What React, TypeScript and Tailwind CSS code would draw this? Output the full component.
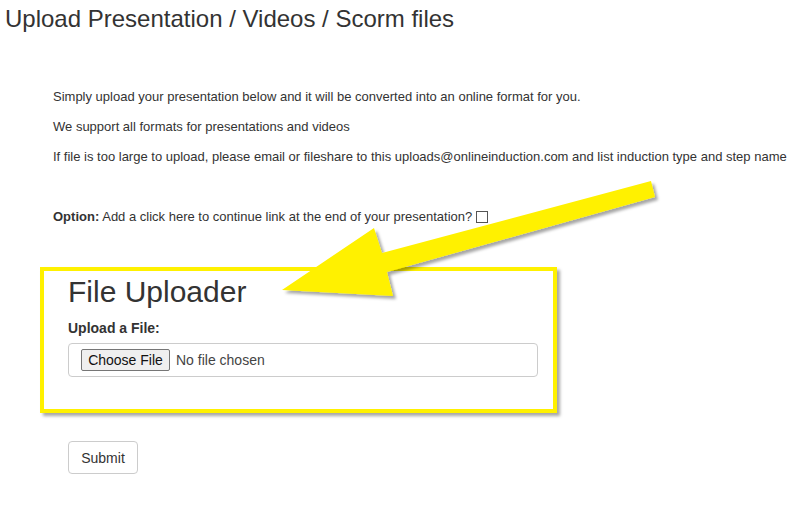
export default function App() {
  return (
    <div className="relative h-[505px] w-[804px] overflow-hidden bg-white font-['Liberation_Sans',Arial,sans-serif] text-[#333]">
      <h1 className="pl-[5px] pt-[5px] text-[24px] leading-[28px]">Upload Presentation / Videos / Scorm files</h1>

      <div className="ml-[53px] mt-[55px] flex flex-col gap-[12px] text-[13px] leading-[18px]">
        <p>Simply upload your presentation below and it will be converted into an online format for you.</p>
        <p>We support all formats for presentations and videos</p>
        <p className="whitespace-nowrap">If file is too large to upload, please email or fileshare to this uploads@onlineinduction.com and list induction type and step name</p>
        <p className="mt-[30px] flex items-center">
          <span className="font-bold">Option:</span>
          <span className="ml-[3px]">Add a click here to continue link at the end of your presentation?</span>
          <span className="ml-[4px] inline-block h-[12px] w-[12px] border border-[#555] bg-white" />
        </p>
      </div>

      <div className="ml-[40px] mt-[41px] flex h-[146px] w-[517px] flex-col border-4 border-[#fff100] pl-[24px] pr-[15px] pt-[4px] shadow-[3px_3px_3px_rgba(0,0,0,0.35)]">
        <h2 className="text-[30px] leading-[34px]">File Uploader</h2>
        <div className="mt-[10px] text-[14px] font-bold leading-[18px]">Upload a File:</div>
        <div className="mt-[6px] flex h-[34px] w-[470px] items-center rounded-[4px] border border-[#ccc] pl-[12px] text-[14px]">
          <span className="flex h-[22px] w-[89px] items-center justify-center rounded-[2px] border border-[#767676] bg-[#efefef] text-[#111]">Choose File</span>
          <span className="ml-[6px] text-[#444]">No file chosen</span>
        </div>
      </div>

      <button className="ml-[68px] mt-[28px] flex h-[33px] w-[70px] items-center justify-center rounded-[4px] border border-[#ccc] bg-white pt-[1px] text-[14px] text-[#333]">
        Submit
      </button>

      <svg className="pointer-events-none absolute inset-0" width="804" height="505" viewBox="0 0 804 505">
        <defs>
          <filter id="sh" x="-10%" y="-10%" width="130%" height="130%">
            <feDropShadow dx="3" dy="3" stdDeviation="1.5" floodColor="#000" floodOpacity="0.35" />
          </filter>
        </defs>
        <polygon
          points="651,181 655,197 387,272 393,296 282,290 374,228 382,253"
          fill="#fff100"
          filter="url(#sh)"
        />
      </svg>
    </div>
  );
}
